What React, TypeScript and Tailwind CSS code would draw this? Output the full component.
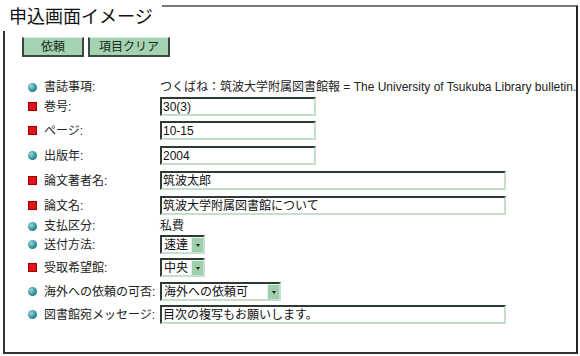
import { ReactNode } from 'react'

type BulletKind = 'req' | 'opt'

const Bullet = ({ kind }: { kind: BulletKind }) =>
  kind === 'req' ? (
    <span className="h-[9px] w-[9px] shrink-0 border border-[#a00000] bg-[#e01414]" />
  ) : (
    <span className="h-[9px] w-[9px] shrink-0 rounded-full bg-[radial-gradient(circle_at_35%_35%,#9ad8de,#2a8a96_60%,#17606b)]" />
  )

const TextBox = ({ value, width }: { value: string; width: string }) => (
  <div
    className={`${width} flex h-[19px] items-center border-t-2 border-r-2 border-b-2 border-l-2 border-t-[#2e3a32] border-l-[#2e3a32] border-r-[#c4dfcc] border-b-[#c4dfcc] bg-white pl-[1px] text-[12px] leading-none text-[#111]`}
  >
    {value}
  </div>
)

const SelectBox = ({ value, width }: { value: string; width: string }) => (
  <div
    className={`${width} flex h-[19px] items-center justify-between border-t-2 border-r-2 border-b-2 border-l-2 border-t-[#2e3a32] border-l-[#2e3a32] border-r-[#c4dfcc] border-b-[#c4dfcc] bg-white pl-[2px] text-[12px] leading-none text-[#111]`}
  >
    <span>{value}</span>
    <span className="flex h-[15px] w-[12px] items-center justify-center border-t border-l border-t-[#e6f3ea] border-l-[#e6f3ea] bg-[#9fceac]">
      <span className="h-0 w-0 border-t-[3px] border-r-[2px] border-l-[2px] border-t-[#222] border-r-transparent border-l-transparent" />
    </span>
  </div>
)

type RowProps = {
  kind: BulletKind
  label: string
  className: string
  children: ReactNode
}

const Row = ({ kind, label, className, children }: RowProps) => (
  <div className={`flex items-center ${className}`}>
    <div className="flex w-[155px] shrink-0 items-center gap-[7px] pl-[23px]">
      <Bullet kind={kind} />
      <span className="text-[12px] leading-none whitespace-nowrap text-[#222]">
        {label}
      </span>
    </div>
    {children}
  </div>
)

const Button = ({ children, width }: { children: ReactNode; width: string }) => (
  <div
    className={`${width} flex h-[20px] items-center justify-center border-t border-l-2 border-r-2 border-b-2 border-t-[#dff0e4] border-l-[#3b4a40] border-r-[#3b4a40] border-b-[#3b4a40] bg-[#a3d3b0] text-[12px] leading-none text-[#1b2a20]`}
  >
    {children}
  </div>
)

export default function App() {
  return (
    <div className="relative h-[356px] w-[580px] bg-white font-['Liberation_Sans','Noto_Sans_CJK_JP',sans-serif]">
      <div className="absolute top-0 left-0 z-10 h-[31px] w-[162px] bg-white pt-[7px] pl-[9px] text-[18px] leading-[20px] text-[#111]">
        申込画面イメージ
      </div>

      <div className="ml-[3px] h-[349px] w-[575px] translate-y-[5px] border-t-2 border-r-2 border-b-2 border-l-2 border-t-[#777] border-r-[#222] border-b-[#333] border-l-[#333] pt-[30px]">
        <div className="flex gap-[4px] pl-[17px]">
          <Button width="w-[62px]">依頼</Button>
          <Button width="w-[82px]">項目クリア</Button>
        </div>

        <div className="flex flex-col pt-[21px]">
          <Row kind="opt" label="書誌事項:" className="h-[18px]">
            <span className="text-[12px] leading-none whitespace-nowrap text-[#222]">
              つくばね：筑波大学附属図書館報 = The University of Tsukuba Library bulletin.
            </span>
          </Row>
          <Row kind="req" label="巻号:" className="mt-[1px] h-[19px]">
            <TextBox value="30(3)" width="w-[156px]" />
          </Row>
          <Row kind="req" label="ページ:" className="mt-[5px] h-[19px]">
            <TextBox value="10-15" width="w-[156px]" />
          </Row>
          <Row kind="opt" label="出版年:" className="mt-[6px] h-[19px]">
            <TextBox value="2004" width="w-[156px]" />
          </Row>
          <Row kind="req" label="論文著者名:" className="mt-[6px] h-[19px]">
            <TextBox value="筑波太郎" width="w-[346px]" />
          </Row>
          <Row kind="req" label="論文名:" className="mt-[6px] h-[19px]">
            <TextBox value="筑波大学附属図書館について" width="w-[346px]" />
          </Row>
          <Row kind="opt" label="支払区分:" className="mt-[2px] h-[18px]">
            <span className="text-[12px] leading-none text-[#222]">私費</span>
          </Row>
          <Row kind="opt" label="送付方法:" className="mt-[0px] h-[19px]">
            <SelectBox value="速達" width="w-[45px]" />
          </Row>
          <Row kind="req" label="受取希望館:" className="mt-[4px] h-[19px]">
            <SelectBox value="中央" width="w-[45px]" />
          </Row>
          <Row kind="opt" label="海外への依頼の可否:" className="mt-[5px] h-[19px]">
            <SelectBox value="海外への依頼可" width="w-[121px]" />
          </Row>
          <Row kind="opt" label="図書館宛メッセージ:" className="mt-[4px] h-[19px]">
            <TextBox value="目次の複写もお願いします。" width="w-[346px]" />
          </Row>
        </div>
      </div>
    </div>
  )
}
